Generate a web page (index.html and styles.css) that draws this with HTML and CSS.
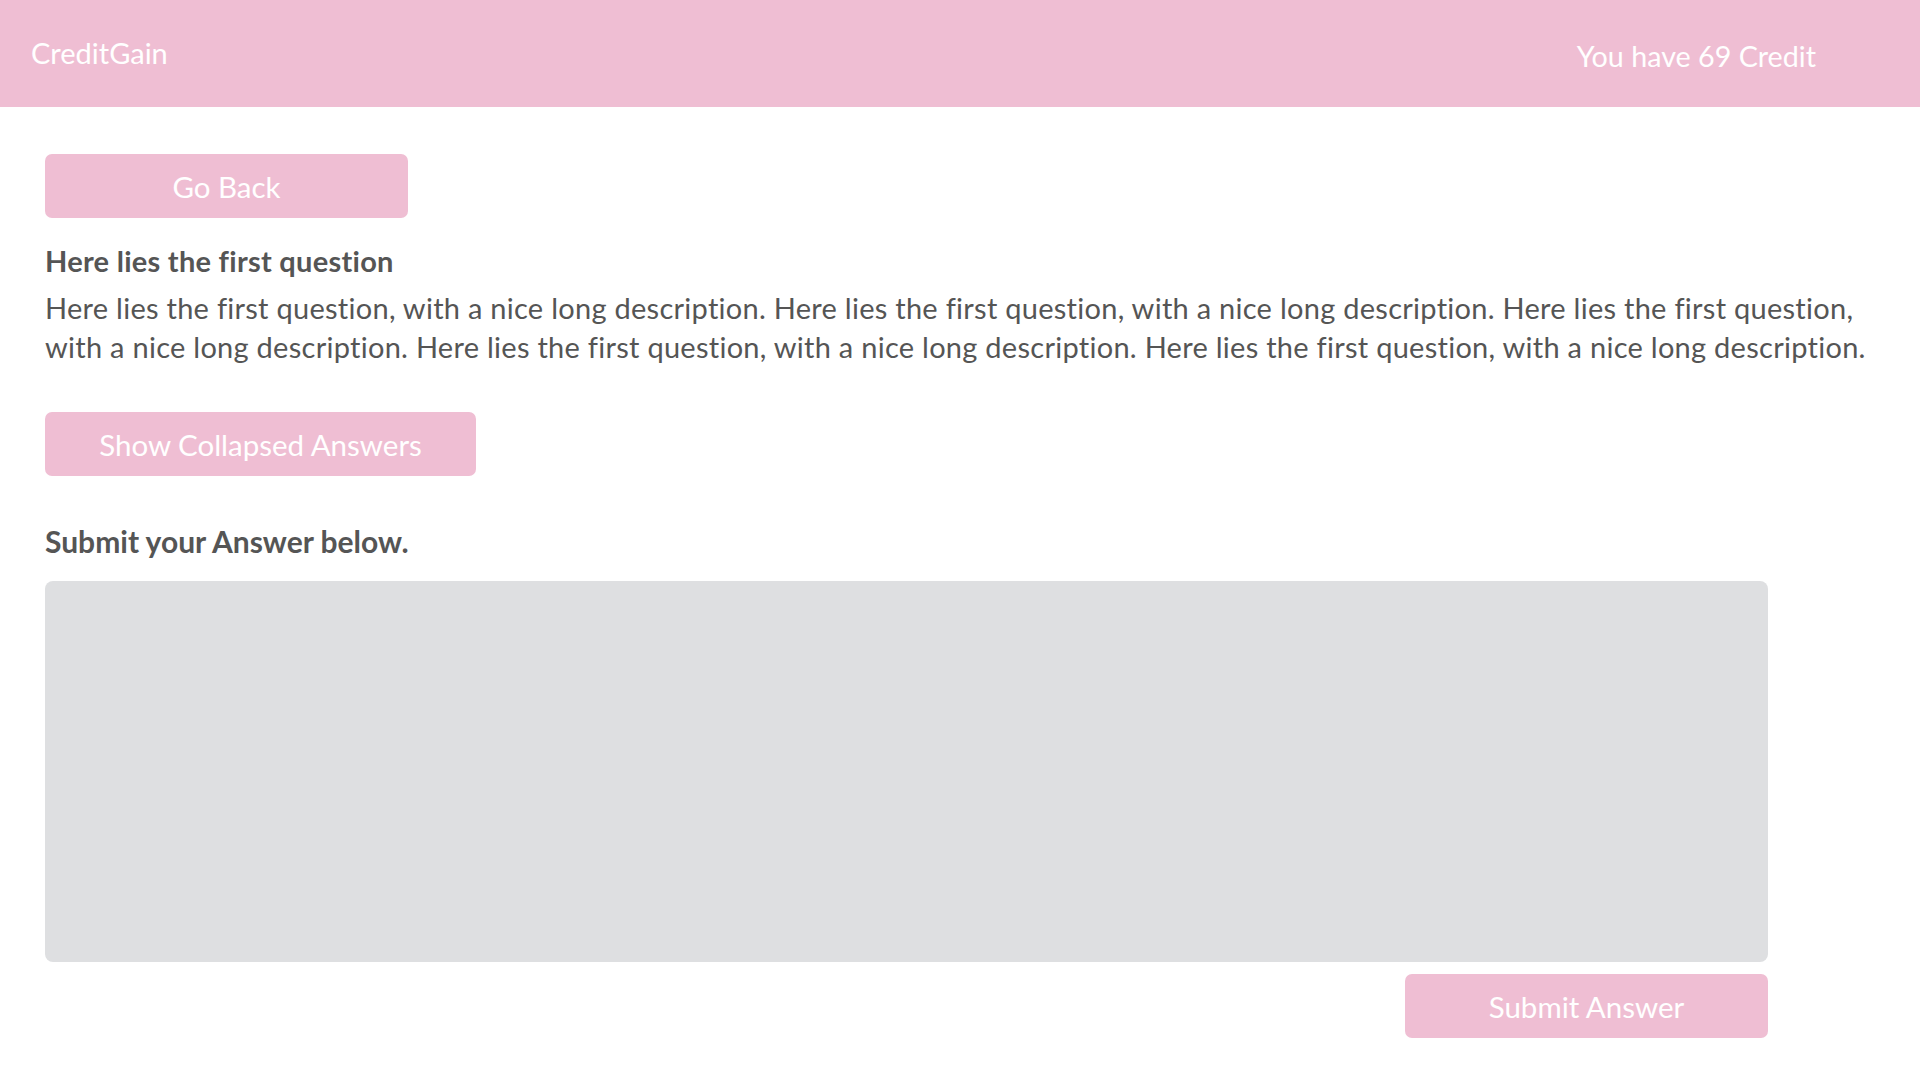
FILE: index.html
```html
<!DOCTYPE html>
<html lang="en">
<head>
<meta charset="utf-8">
<title>CreditGain</title>
<link rel="stylesheet" href="styles.css">
</head>
<body>
<header class="topbar">
  <div class="brand">CreditGain</div>
  <div class="credit">You have 69 Credit</div>
</header>
<main class="page">
  <button class="btn btn-back">Go Back</button>
  <h2 class="q-title">Here lies the first question</h2>
  <p class="q-desc">Here lies the first question, with a nice long description. Here lies the first question, with a nice long description. Here lies the first question, with a nice long description. Here lies the first question, with a nice long description. Here lies the first question, with a nice long description.</p>
  <button class="btn btn-collapsed">Show Collapsed Answers</button>
  <h3 class="answer-label">Submit your Answer below.</h3>
  <form class="answer-form">
    <textarea class="answer-box"></textarea>
    <button type="button" class="btn btn-submit">Submit Answer</button>
  </form>
</main>
</body>
</html>
```
FILE: styles.css
```css
* { box-sizing: border-box; }
html, body { margin: 0; padding: 0; background: #ffffff; }
body { font-family: Lato, "Open Sans", sans-serif; color: #555555; }

.topbar {
  height: 107px;
  background: #efbed3;
  display: flex;
  justify-content: space-between;
  align-items: center;
  padding: 0 104px 0 31px;
  color: #ffffff;
}
.brand { font-size: 29px; line-height: 1; margin-top: -3px; }
.credit { font-size: 28.7px; line-height: 1; margin-top: 5px; }

.page { padding: 47px 45px 0 45px; }

.btn {
  display: block;
  border: 0;
  border-radius: 7px;
  background: #efbed3;
  color: #ffffff;
  font-family: Lato, "Open Sans", sans-serif;
  font-size: 29.5px;
  height: 64px;
  padding: 0;
  cursor: pointer;
}
.btn-back { width: 363px; }
.btn-collapsed { width: 431px; margin-top: 46px; }

.q-title { font-size: 29px; letter-spacing: 0.27px; font-weight: 700; margin: 27px 0 0 0; line-height: 32px; }
.q-desc { font-size: 29px; letter-spacing: 0.27px; line-height: 39px; margin: 11px 0 0 0; max-width: 1830px; }

.answer-label { font-size: 30px; font-weight: 700; margin: 47px 0 0 0; line-height: 36px; }

.answer-form { width: 1723px; display: flex; flex-direction: column; align-items: flex-end; margin-top: 22px; }
.answer-box {
  width: 100%;
  height: 381px;
  border: 0;
  border-radius: 8px;
  background: #dedfe1;
  resize: none;
  display: block;
}
.btn-submit { width: 363px; margin-top: 12px; }
```
